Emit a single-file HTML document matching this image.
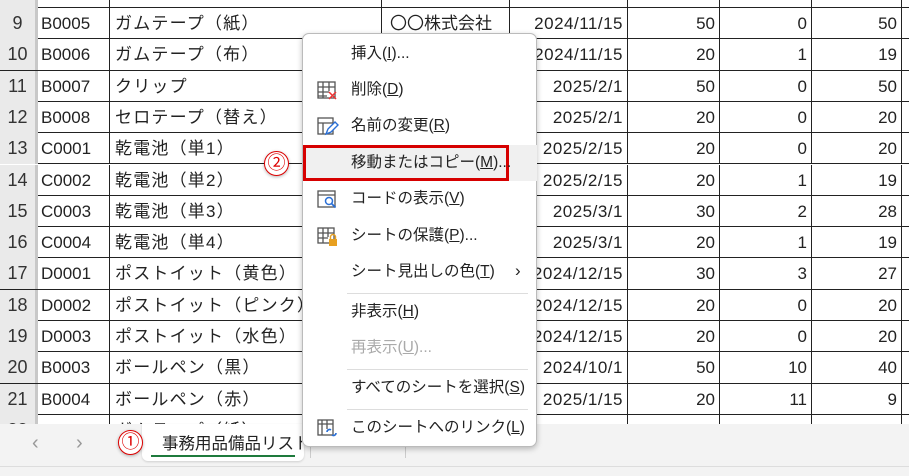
<!DOCTYPE html>
<html><head><meta charset="utf-8"><style>
*{margin:0;padding:0;box-sizing:border-box}
body{width:909px;height:476px;overflow:hidden;background:#fff;position:relative;font-family:"Liberation Sans","Noto Sans CJK JP",sans-serif;color:#222}
.grid{position:absolute;left:0;top:0}
.r{position:absolute;left:0;height:31.3px;width:909px;border-bottom:1.5px solid #222;font-size:17px}
.r div{position:absolute;top:0;height:31px;line-height:31px;white-space:nowrap;overflow:hidden}
.h{left:0;width:38px;background:#eaeaea;text-align:center;color:#333;border-right:3px solid #c8c8c8;font-size:18px}
.b{left:38px;width:72px;padding-left:3px;border-right:1.5px solid #222}
.c{left:110px;width:272px;padding-left:5px;border-right:1.5px solid #222;letter-spacing:1.2px}
.d{left:382px;width:128px;padding-left:8px;border-right:1.5px solid #222}
.e{left:510px;width:118px;text-align:right;padding-right:4px;border-right:1.5px solid #222;letter-spacing:0.5px}
.f{left:628px;width:92px;text-align:right;padding-right:4px;border-right:1.5px solid #222}
.g{left:720px;width:92px;text-align:right;padding-right:4px;border-right:1.5px solid #222}
.i{left:812px;width:90px;text-align:right;padding-right:4px;border-right:1.5px solid #222}
.menu{position:absolute;left:302px;top:33px;width:235px;height:414px;background:#fff;border:1px solid #bbb;border-radius:7px;box-shadow:0 2px 6px rgba(0,0,0,.25);font-size:15.5px}
.mi{position:absolute;left:0;width:234px;height:36px;line-height:36px;padding-left:48px;color:#222;white-space:nowrap}
.mi u{text-decoration:underline}
.sep{position:absolute;left:44px;right:8px;border-top:1px solid #ddd}
.ic{position:absolute;left:14px;top:9px}
.circ{position:absolute;width:25px;height:25px;border-radius:50%;background:#fff;border:1.5px solid #d00;color:#d00;text-align:center;line-height:22px;font-size:18px;box-shadow:0 1px 3px rgba(0,0,0,.3)}
.tabbar{position:absolute;left:0;top:424px;width:909px;height:52px;background:#f3f3f3}
</style></head><body>
<div class="grid">
<div class="r" style="top:-23.3px"><div class="h"></div><div class="b"></div><div class="c"></div><div class="d"></div><div class="e"></div><div class="f"></div><div class="g"></div><div class="i"></div></div>
<div class="r" style="top:8px"><div class="h">9</div><div class="b">B0005</div><div class="c">ガムテープ（紙）</div><div class="d">〇〇株式会社</div><div class="e">2024/11/15</div><div class="f">50</div><div class="g">0</div><div class="i">50</div></div>
<div class="r" style="top:39.3px"><div class="h">10</div><div class="b">B0006</div><div class="c">ガムテープ（布）</div><div class="d"></div><div class="e">2024/11/15</div><div class="f">20</div><div class="g">1</div><div class="i">19</div></div>
<div class="r" style="top:70.6px"><div class="h">11</div><div class="b">B0007</div><div class="c">クリップ</div><div class="d"></div><div class="e">2025/2/1</div><div class="f">50</div><div class="g">0</div><div class="i">50</div></div>
<div class="r" style="top:101.9px"><div class="h">12</div><div class="b">B0008</div><div class="c">セロテープ（替え）</div><div class="d"></div><div class="e">2025/2/1</div><div class="f">20</div><div class="g">0</div><div class="i">20</div></div>
<div class="r" style="top:133.2px"><div class="h">13</div><div class="b">C0001</div><div class="c">乾電池（単1）</div><div class="d"></div><div class="e">2025/2/15</div><div class="f">20</div><div class="g">0</div><div class="i">20</div></div>
<div class="r" style="top:164.5px"><div class="h">14</div><div class="b">C0002</div><div class="c">乾電池（単2）</div><div class="d"></div><div class="e">2025/2/15</div><div class="f">20</div><div class="g">1</div><div class="i">19</div></div>
<div class="r" style="top:195.8px"><div class="h">15</div><div class="b">C0003</div><div class="c">乾電池（単3）</div><div class="d"></div><div class="e">2025/3/1</div><div class="f">30</div><div class="g">2</div><div class="i">28</div></div>
<div class="r" style="top:227.1px"><div class="h">16</div><div class="b">C0004</div><div class="c">乾電池（単4）</div><div class="d"></div><div class="e">2025/3/1</div><div class="f">20</div><div class="g">1</div><div class="i">19</div></div>
<div class="r" style="top:258.4px"><div class="h">17</div><div class="b">D0001</div><div class="c">ポストイット（黄色）</div><div class="d"></div><div class="e">2024/12/15</div><div class="f">30</div><div class="g">3</div><div class="i">27</div></div>
<div class="r" style="top:289.7px"><div class="h">18</div><div class="b">D0002</div><div class="c">ポストイット（ピンク）</div><div class="d"></div><div class="e">2024/12/15</div><div class="f">20</div><div class="g">0</div><div class="i">20</div></div>
<div class="r" style="top:321px"><div class="h">19</div><div class="b">D0003</div><div class="c">ポストイット（水色）</div><div class="d"></div><div class="e">2024/12/15</div><div class="f">20</div><div class="g">0</div><div class="i">20</div></div>
<div class="r" style="top:352.3px"><div class="h">20</div><div class="b">B0003</div><div class="c">ボールペン（黒）</div><div class="d"></div><div class="e">2024/10/1</div><div class="f">50</div><div class="g">10</div><div class="i">40</div></div>
<div class="r" style="top:383.6px"><div class="h">21</div><div class="b">B0004</div><div class="c">ボールペン（赤）</div><div class="d"></div><div class="e">2025/1/15</div><div class="f">20</div><div class="g">11</div><div class="i">9</div></div>
<div class="r" style="top:414.9px"><div class="h">22</div><div class="b">B0005</div><div class="c">ガムテープ（紙）</div><div class="d"></div><div class="e">2024/11/15</div><div class="f">50</div><div class="g">0</div><div class="i">50</div></div>
</div>

<div class="tabbar">
<div style="position:absolute;left:32px;top:8px;font-size:20px;color:#999">&#8249;</div>
<div style="position:absolute;left:76px;top:8px;font-size:20px;color:#999">&#8250;</div>
<div style="position:absolute;left:142px;top:0;width:162px;height:37px;background:#fff;border-radius:0 0 6px 6px;box-shadow:0 1px 2px rgba(0,0,0,.15)"></div>
<div style="position:absolute;left:162px;top:6px;font-size:16.5px;color:#222;white-space:nowrap;width:140px;overflow:hidden">事務用品備品リスト</div>
<div style="position:absolute;left:151px;top:31px;width:144px;height:2px;background:#1e7a3c"></div>
<div style="position:absolute;left:345px;top:8px;font-size:16px;color:#444">Sheet1</div>
<div style="position:absolute;left:310px;top:12px;height:22px;border-left:1px solid #ccc"></div>
<div style="position:absolute;left:405px;top:12px;height:22px;border-left:1px solid #ccc"></div>
<div style="position:absolute;left:0;top:42px;width:909px;border-top:1px solid #ddd"></div>
</div>

<div class="menu">
<div class="mi" style="top:2px">挿入(<u>I</u>)...</div>
<div class="mi" style="top:38px"><svg class="ic" width="22" height="20" viewBox="0 0 22 20"><g fill="none" stroke="#555" stroke-width="1.3"><rect x="1" y="1" width="17" height="16"/><path d="M1 6H18M1 11H12M1 15H10M6 1V17M12 1V10"/></g><path d="M12 11l7 7M19 11l-7 7" stroke="#e33" stroke-width="1.5"/></svg>削除(<u>D</u>)</div>
<div class="mi" style="top:74px"><svg class="ic" width="22" height="20" viewBox="0 0 22 20"><g fill="none" stroke="#555" stroke-width="1.3"><rect x="1" y="1" width="15" height="16"/><path d="M1 6H16M6 6V17"/></g><path d="M9 17l2-5 7-7 3 3-7 7z" fill="#fff" stroke="#2a6fd6" stroke-width="1.4"/></svg>名前の変更(<u>R</u>)</div>
<div style="position:absolute;left:0;top:111px;width:234px;height:36px;background:#f0f0f0"></div>
<div style="position:absolute;left:0;top:111px;width:206px;height:36px;border:3px solid #d60000"></div>
<div class="mi" style="top:111px">移動またはコピー(<u>M</u>)...</div>
<div class="mi" style="top:147px"><svg class="ic" width="22" height="20" viewBox="0 0 22 20"><g fill="none" stroke="#555" stroke-width="1.3"><rect x="1" y="1" width="17" height="16"/><path d="M1 5H18"/></g><circle cx="12" cy="11" r="3.5" fill="none" stroke="#2a6fd6" stroke-width="1.5"/><path d="M14.5 13.5l4 4" stroke="#2a6fd6" stroke-width="1.8"/></svg>コードの表示(<u>V</u>)</div>
<div class="mi" style="top:184px"><svg class="ic" width="22" height="20" viewBox="0 0 22 20"><g fill="none" stroke="#555" stroke-width="1.3"><rect x="1" y="1" width="16" height="15"/><path d="M1 6H17M1 11H11M6 1V16M11 1V10"/></g><rect x="12" y="12" width="8" height="7" fill="#e8a020"/><path d="M13.5 12V10a2.5 2.5 0 015 0V12" fill="none" stroke="#e8a020" stroke-width="1.4"/></svg>シートの保護(<u>P</u>)...</div>
<div class="mi" style="top:220px">シート見出しの色(<u>T</u>)<span style="position:absolute;left:212px;top:-1px;font-size:17px">&#8250;</span></div>
<div class="sep" style="top:259px"></div>
<div class="mi" style="top:260px">非表示(<u>H</u>)</div>
<div class="mi" style="top:296px;color:#aaa">再表示(<u>U</u>)...</div>
<div class="sep" style="top:335px"></div>
<div class="mi" style="top:336px">すべてのシートを選択(<u>S</u>)</div>
<div class="sep" style="top:375px"></div>
<div class="mi" style="top:376px"><svg class="ic" width="22" height="20" viewBox="0 0 22 20"><g fill="none" stroke="#555" stroke-width="1.3"><rect x="1" y="1" width="15" height="15"/><path d="M1 5H16M5 1V16M10 1V10"/></g><path d="M10 13a2.5 2.5 0 014-2M19 14a2.5 2.5 0 01-4 2" fill="none" stroke="#2a6fd6" stroke-width="1.6"/></svg>このシートへのリンク(<u>L</u>)</div>
</div>

<div class="circ" style="left:264px;top:151px">②</div>
<div class="circ" style="left:118px;top:430px">①</div>
</body></html>
